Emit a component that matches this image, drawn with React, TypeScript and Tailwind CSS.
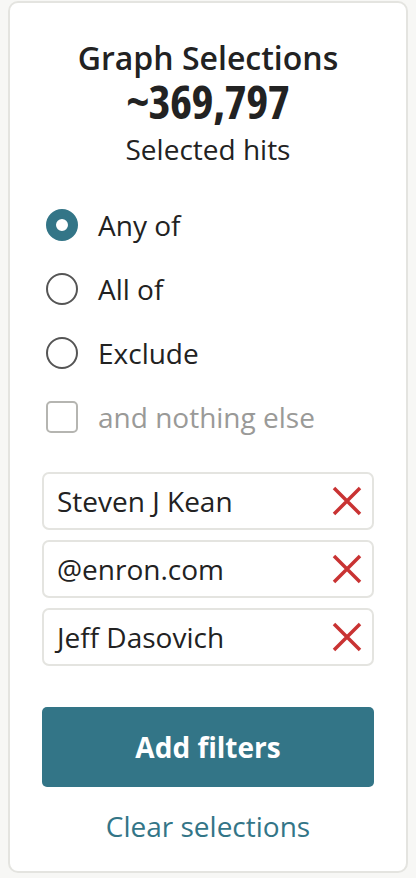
import { useState } from "react";

const filters = ["Steven J Kean", "@enron.com", "Jeff Dasovich"];
const modes = ["Any of", "All of", "Exclude"];

function RemoveIcon() {
  return (
    <svg width="30" height="30" viewBox="0 0 30 30" className="shrink-0">
      <path d="M2 2 L28 28 M28 2 L2 28" stroke="#c93333" strokeWidth="3.5" strokeLinecap="butt" />
    </svg>
  );
}

export default function App() {
  const [mode, setMode] = useState("Any of");
  const [items, setItems] = useState(filters);

  return (
    <div className="min-h-screen bg-[#f7f7f5] px-[8px] pt-px pb-[4px] font-['Open_Sans',sans-serif] text-[#222]">
      <div className="flex flex-col h-[872px] bg-white border-2 border-[#e4e4e0] rounded-[10px] px-[32px]">
        {/* header */}
        <div className="flex flex-col items-center mt-[35px]">
          <h2 className="text-[32px] font-semibold leading-[40px]">Graph Selections</h2>
          <div className="text-[47px] font-bold leading-[46px] [font-stretch:75%] tracking-[-0.5px]">
            ~369,797
          </div>
          <div className="text-[28px] leading-[36px] mt-[7px]">Selected hits</div>
        </div>

        {/* modes */}
        <div className="flex flex-col mt-[26px] pl-[4px]">
          {modes.map((m) => (
            <label
              key={m}
              onClick={() => setMode(m)}
              className="flex items-center gap-[20px] h-[64px] cursor-pointer"
            >
              {mode === m ? (
                <span className="w-[32px] h-[32px] rounded-full border-[10px] border-[#337587] shrink-0" />
              ) : (
                <span className="w-[32px] h-[32px] rounded-full border-2 border-[#555] shrink-0" />
              )}
              <span className="text-[28px]">{m}</span>
            </label>
          ))}
          <label className="flex items-center gap-[20px] h-[64px]">
            <span className="w-[32px] h-[32px] rounded-[5px] border-2 border-[#b5b5b1] shrink-0" />
            <span className="text-[28px] text-[#9a9a98]">and nothing else</span>
          </label>
        </div>

        {/* filter list */}
        <div className="flex flex-col gap-[10px] mt-[23px]">
          {items.map((f) => (
            <div
              key={f}
              className="flex items-center justify-between h-[58px] border-2 border-[#e4e4e0] rounded-[7px] pl-[13px] pr-[10px]"
            >
              <span className="text-[28px]">{f}</span>
              <button onClick={() => setItems(items.filter((i) => i !== f))}>
                <RemoveIcon />
              </button>
            </div>
          ))}
        </div>

        <button className="mt-[41px] h-[80px] w-full bg-[#337587] rounded-[5px] text-white text-[28px] font-bold">
          Add filters
        </button>
        <button className="mt-[18px] text-[28px] text-[#337587] text-center">
          Clear selections
        </button>
      </div>
    </div>
  );
}
